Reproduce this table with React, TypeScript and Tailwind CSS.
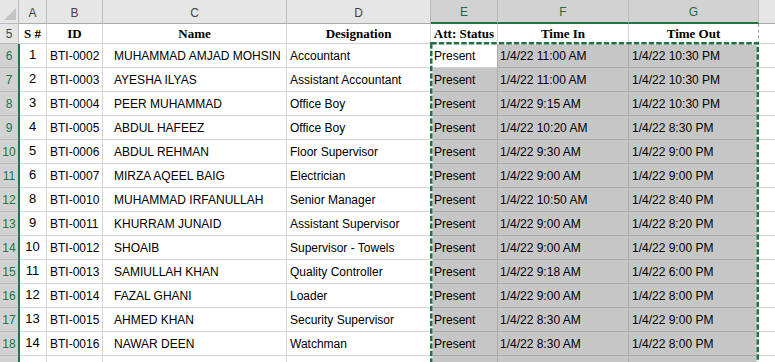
import React from 'react';

interface Employee {
  sn: number;
  id: string;
  name: string;
  designation: string;
  status: string;
  timeIn: string;
  timeOut: string;
}

const EMPLOYEES: Employee[] = [
  { sn: 1, id: 'BTI-0002', name: 'MUHAMMAD AMJAD MOHSIN', designation: 'Accountant', status: 'Present', timeIn: '1/4/22 11:00 AM', timeOut: '1/4/22 10:30 PM' },
  { sn: 2, id: 'BTI-0003', name: 'AYESHA ILYAS', designation: 'Assistant Accountant', status: 'Present', timeIn: '1/4/22 11:00 AM', timeOut: '1/4/22 10:30 PM' },
  { sn: 3, id: 'BTI-0004', name: 'PEER MUHAMMAD', designation: 'Office Boy', status: 'Present', timeIn: '1/4/22 9:15 AM', timeOut: '1/4/22 10:30 PM' },
  { sn: 4, id: 'BTI-0005', name: 'ABDUL HAFEEZ', designation: 'Office Boy', status: 'Present', timeIn: '1/4/22 10:20 AM', timeOut: '1/4/22 8:30 PM' },
  { sn: 5, id: 'BTI-0006', name: 'ABDUL REHMAN', designation: 'Floor Supervisor', status: 'Present', timeIn: '1/4/22 9:30 AM', timeOut: '1/4/22 9:00 PM' },
  { sn: 6, id: 'BTI-0007', name: 'MIRZA AQEEL BAIG', designation: 'Electrician', status: 'Present', timeIn: '1/4/22 9:00 AM', timeOut: '1/4/22 9:00 PM' },
  { sn: 8, id: 'BTI-0010', name: 'MUHAMMAD IRFANULLAH', designation: 'Senior Manager', status: 'Present', timeIn: '1/4/22 10:50 AM', timeOut: '1/4/22 8:40 PM' },
  { sn: 9, id: 'BTI-0011', name: 'KHURRAM JUNAID', designation: 'Assistant Supervisor', status: 'Present', timeIn: '1/4/22 9:00 AM', timeOut: '1/4/22 8:20 PM' },
  { sn: 10, id: 'BTI-0012', name: 'SHOAIB', designation: 'Supervisor - Towels', status: 'Present', timeIn: '1/4/22 9:00 AM', timeOut: '1/4/22 9:00 PM' },
  { sn: 11, id: 'BTI-0013', name: 'SAMIULLAH KHAN', designation: 'Quality Controller', status: 'Present', timeIn: '1/4/22 9:18 AM', timeOut: '1/4/22 6:00 PM' },
  { sn: 12, id: 'BTI-0014', name: 'FAZAL GHANI', designation: 'Loader', status: 'Present', timeIn: '1/4/22 9:00 AM', timeOut: '1/4/22 8:00 PM' },
  { sn: 13, id: 'BTI-0015', name: 'AHMED KHAN', designation: 'Security Supervisor', status: 'Present', timeIn: '1/4/22 8:30 AM', timeOut: '1/4/22 9:00 PM' },
  { sn: 14, id: 'BTI-0016', name: 'NAWAR DEEN', designation: 'Watchman', status: 'Present', timeIn: '1/4/22 8:30 AM', timeOut: '1/4/22 8:00 PM' },
];

const COLUMNS = ['A', 'B', 'C', 'D', 'E', 'F', 'G', 'H'];
const SELECTED_COLS = ['E', 'F', 'G'];

// plain cell: white, light gridlines, text sits near the bottom like excel
const cell = 'h-[24px] flex items-end pb-[4px] leading-[14px] whitespace-nowrap overflow-hidden border-r border-b border-[#d4d4d4]';
// cells inside the copied range E:G
const selCell = 'h-[24px] flex items-end pb-[4px] leading-[14px] whitespace-nowrap overflow-hidden border-r border-b border-[#ababab] bg-[#c6c6c6]';
const titleCell = 'h-[20px] flex items-center justify-center leading-[15px] whitespace-nowrap border-r border-b border-[#d4d4d4] font-["Liberation_Serif","Times_New_Roman",serif] font-bold text-[13px] text-black';

const RowHeader: React.FC<{ n?: number; selected?: boolean }> = ({ n, selected }) => (
  <div
    className={
      selected
        ? 'h-[24px] flex items-center justify-center bg-[#d2d2d2] text-[#217346] border-b border-b-[#bababa] border-r border-r-[#217346] shadow-[1px_0_0_0_#217346] relative z-10'
        : 'h-[20px] flex items-center justify-center bg-[#e6e6e6] text-[#444] border-b border-r border-[#bababa]'
    }
  >
    {n}
  </div>
);

const App: React.FC = () => {
  return (
    <div className="w-[775px] h-[362px] overflow-hidden bg-white relative font-['Liberation_Sans',Arial,sans-serif] text-[12px] text-black">
      <div className="grid grid-cols-[19px_28px_56px_184px_144px_67px_131px_130px_16px]">
        {/* select-all corner */}
        <div className="h-[24px] bg-[#e6e6e6] border-r border-b border-[#bababa]">
          <svg width="18" height="23" viewBox="0 0 18 23">
            <polygon points="16,8 16,20 4,20" fill="#c3c3c3" />
          </svg>
        </div>

        {/* column letters */}
        {COLUMNS.map((c) =>
          SELECTED_COLS.includes(c) ? (
            <div
              key={c}
              className="h-[24px] flex items-center justify-center pt-[1px] bg-[#d2d2d2] text-[#1e6b3e] border-r border-r-[#bababa] border-b-2 border-b-[#217346]"
            >
              {c}
            </div>
          ) : (
            <div
              key={c}
              className={`h-[24px] flex items-center justify-center pt-[2px] bg-[#e6e6e6] text-[#444] border-b border-[#ababab] ${c === 'H' ? '' : 'border-r border-r-[#bababa]'}`}
            >
              {c === 'H' ? '' : c}
            </div>
          )
        )}

        {/* row 5: titles */}
        <RowHeader n={5} />
        <div className={titleCell}>S #</div>
        <div className={titleCell}>ID</div>
        <div className={titleCell}>Name</div>
        <div className={titleCell}>Designation</div>
        <div className={titleCell}>Att: Status</div>
        <div className={titleCell}>Time In</div>
        <div className={`${titleCell} border-r-[#9a9a9a] [border-right-style:dashed]`}>Time Out</div>
        <div className="h-[20px] border-b border-[#d4d4d4]"></div>

        {/* data rows */}
        {EMPLOYEES.map((e, i) => (
          <React.Fragment key={e.id}>
            <RowHeader n={i + 6} selected />
            <div className={`${cell} justify-center text-[13px] pb-[5px]`}>{e.sn}</div>
            <div className={`${cell} pl-[3px]`}>{e.id}</div>
            <div className={`${cell} pl-[11px]`}>{e.name}</div>
            <div className={`${cell} pl-[3px]`}>{e.designation}</div>
            <div className={i === 0 ? `${cell} pl-[3px] border-r-[#ababab]` : `${selCell} pl-[3px]`}>{e.status}</div>
            <div className={`${selCell} pl-[2px]`}>{e.timeIn}</div>
            <div className={`${selCell} pl-[3px]`}>{e.timeOut}</div>
            <div className="h-[24px] border-b border-[#d4d4d4]"></div>
          </React.Fragment>
        ))}

        {/* next row, only its top few pixels show */}
        <RowHeader selected />
        <div className={cell}></div>
        <div className={cell}></div>
        <div className={cell}></div>
        <div className={cell}></div>
        <div className={selCell}></div>
        <div className={selCell}></div>
        <div className={selCell}></div>
        <div className="h-[24px] border-b border-[#d4d4d4]"></div>
      </div>

      {/* copy marquee around E6:G... */}
      <div className="absolute left-[430px] top-[42px] w-[329px] h-[330px] pointer-events-none">
        <svg width="329" height="330" viewBox="0 0 329 330">
          <rect x="1.25" y="1.25" width="326.5" height="400" fill="none" stroke="#ffffff" strokeWidth="2.5" />
          <rect x="1.25" y="1.25" width="326.5" height="400" fill="none" stroke="#217346" strokeWidth="2.5" strokeDasharray="5.5 2" />
        </svg>
      </div>
    </div>
  );
};

export default App;
